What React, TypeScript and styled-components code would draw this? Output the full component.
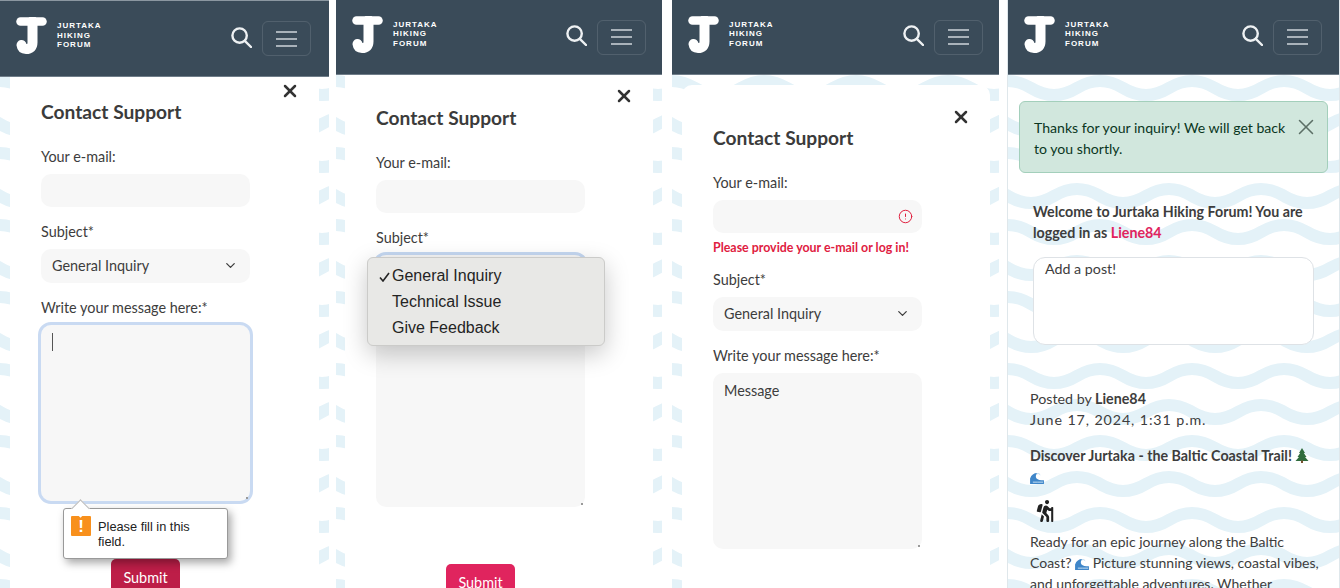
import React from 'react';
import styled, { createGlobalStyle } from 'styled-components';
import { ChevronDown, CircleAlert, X } from 'lucide-react';
import { FaHiking } from 'react-icons/fa';

const GlobalStyle = createGlobalStyle`
  html, body {
    margin: 0;
    padding: 0;
    background: #fff;
    overflow: hidden;
  }
  * {
    box-sizing: border-box;
  }
`;

const waves = encodeURIComponent(
  `<svg xmlns="http://www.w3.org/2000/svg" width="92" height="72"><g fill="none" stroke="#e4f2f8" stroke-width="12"><path d="M-23 18 Q0 4 23 18 T69 18 T115 18"/><path d="M-46 54 Q-23 40 0 54 T46 54 T92 54 T138 54"/></g></svg>`
);

const Page = styled.div`
  display: flex;
  width: 1340px;
  height: 588px;
  overflow: hidden;
  font-family: Lato, 'Noto Sans', sans-serif;
  font-size: 14.4px;
  line-height: 21px;
  color: #3d3d3d;
`;

const Phone = styled.section<{ $width: number; $gap: number; $framed?: boolean }>`
  flex: none;
  width: ${(p) => p.$width}px;
  margin-right: ${(p) => p.$gap}px;
  height: 588px;
  overflow: hidden;
  background-color: #fff;
  background-image: url("data:image/svg+xml,${waves}");
  background-position: 0 70px;
  ${(p) => (p.$framed ? 'border-left: 1px solid #dfe7eb; border-right: 1px solid #dfe7eb; font-size: 14.25px;' : '')}
`;

const Header = styled.header<{ $offset?: number; $right: number }>`
  display: flex;
  align-items: center;
  justify-content: space-between;
  height: ${(p) => 75 + (p.$offset ?? 0) * 2}px;
  padding: 0 ${(p) => p.$right}px 0 16px;
  background: #3a4b59;
  border-top: ${(p) => (p.$offset ? '1px solid #8b97a1' : 'none')};
  border-bottom: 1px solid #6f7d89;
`;

const Brand = styled.div`
  display: flex;
  align-items: center;
  gap: 10px;
  margin-bottom: 6px;
`;

const BrandText = styled.div`
  font-family: 'Liberation Sans', Arial, sans-serif;
  font-size: 8px;
  font-weight: 700;
  line-height: 9.5px;
  letter-spacing: 1px;
  color: #fff;
`;

const Tools = styled.div`
  display: flex;
  align-items: center;
  gap: 10px;
`;

const SearchWrap = styled.span`
  display: flex;
  margin-bottom: 3px;
`;

const MenuButton = styled.button`
  display: flex;
  flex-direction: column;
  align-items: center;
  justify-content: center;
  gap: 5px;
  width: 49px;
  height: 35px;
  padding: 0;
  background: transparent;
  border: 1px solid rgba(255, 255, 255, 0.12);
  border-radius: 6px;
`;

const MenuLine = styled.span`
  width: 21px;
  height: 2px;
  background: #a9b2ba;
`;

const Card = styled.div<{ $inset: number; $width: number; $top: number; $padTop: number }>`
  position: relative;
  width: ${(p) => p.$width}px;
  height: 600px;
  margin: ${(p) => p.$top}px 0 0 ${(p) => p.$inset}px;
  padding: ${(p) => p.$padTop}px 31px 0;
  background: #fff;
  border-radius: ${(p) => (p.$top ? '10px 10px 0 0' : '0')};
`;

const CloseButton = styled.button<{ $top: number }>`
  position: absolute;
  top: ${(p) => p.$top}px;
  right: 19px;
  display: flex;
  padding: 0;
  color: #333;
  background: none;
  border: 0;
`;

const Title = styled.h2`
  margin: -1px 0 22px;
  font-size: 19.2px;
  font-weight: 700;
  line-height: 24px;
  color: #3b3b3b;
`;

const Field = styled.div`
  position: relative;
  margin-bottom: 14px;
`;

const Label = styled.div`
  margin-bottom: 7px;
`;

const InputBox = styled.div`
  display: flex;
  align-items: center;
  justify-content: flex-end;
  width: 209px;
  height: 33px;
  padding: 0 9px;
  color: #e0203f;
  background: #f7f7f7;
  border-radius: 10px;
`;

const ErrorText = styled.div`
  margin-top: 7px;
  font-size: 12.4px;
  font-weight: 700;
  line-height: 15px;
  color: #e0203f;
`;

const SelectBox = styled.div<{ $focused?: boolean }>`
  display: flex;
  align-items: center;
  justify-content: space-between;
  width: 209px;
  height: 34px;
  padding: 0 12px 1px 11px;
  background: #f7f7f7;
  border-radius: 10px;
  outline: ${(p) => (p.$focused ? '3px solid #c5d8f2' : 'none')};
`;

const MessageBox = styled.div<{ $focused?: boolean }>`
  position: relative;
  width: 209px;
  height: 176px;
  padding: 7px 11px;
  background: #f7f7f7;
  border-radius: 10px;
  outline: ${(p) => (p.$focused ? '3px solid #c9daf2' : 'none')};
`;

const Caret = styled.div`
  width: 1px;
  height: 18px;
  margin-top: 1px;
  background: #555;
`;

const Grip = styled.span`
  position: absolute;
  right: 2px;
  bottom: 2px;
  width: 2px;
  height: 2px;
  background: #9a9a9a;
`;

const SubmitRow = styled.div<{ $gap: number }>`
  display: flex;
  justify-content: center;
  width: 209px;
  margin-top: ${(p) => p.$gap}px;
`;

const SubmitButton = styled.button<{ $pressed?: boolean }>`
  width: 69px;
  height: 36px;
  padding: 0;
  font-family: Lato, sans-serif;
  font-size: 14.4px;
  color: #fff;
  background: ${(p) => (p.$pressed ? '#bd1e48' : '#e0245e')};
  border: 0;
  border-radius: 5px 5px 0 0;
`;

const Tooltip = styled.div`
  position: absolute;
  top: 211px;
  left: 22px;
  z-index: 2;
  display: flex;
  gap: 7px;
  width: 165px;
  height: 51px;
  padding: 7px;
  font-family: 'Liberation Sans', Arial, sans-serif;
  font-size: 12.8px;
  line-height: 15px;
  color: #222;
  background: #fff;
  border: 1px solid #999;
  border-radius: 3px;
  box-shadow: 3px 4px 8px rgba(0, 0, 0, 0.35);

  &::before {
    content: '';
    position: absolute;
    top: -7px;
    left: 10px;
    width: 12px;
    height: 12px;
    background: #fff;
    border-top: 1px solid #bbb;
    border-left: 1px solid #bbb;
    transform: rotate(45deg);
  }
`;

const WarnIcon = styled.span`
  flex: none;
  display: flex;
  align-items: center;
  justify-content: center;
  width: 20px;
  height: 20px;
  font-size: 17px;
  font-weight: 700;
  color: #fff;
  background: #f8901c;
  border-radius: 1px;
`;

const TooltipText = styled.span`
  padding-top: 3px;
`;

const Dropdown = styled.ul`
  position: absolute;
  top: 30px;
  left: -9px;
  z-index: 2;
  width: 238px;
  height: 89px;
  margin: 0;
  padding: 5px 0 0;
  list-style: none;
  font-family: 'Liberation Sans', Arial, sans-serif;
  font-size: 16px;
  line-height: 26px;
  color: #242424;
  background: #e8e8e6;
  border: 1px solid #cbcbc9;
  border-radius: 6px;
  box-shadow: 0 8px 24px rgba(0, 0, 0, 0.22);
`;

const DropdownItem = styled.li`
  position: relative;
  padding-left: 24px;
`;

const Check = styled.svg`
  position: absolute;
  top: 9px;
  left: 11px;
`;

const Alert = styled.div`
  display: flex;
  align-items: flex-start;
  justify-content: space-between;
  width: 309px;
  height: 72px;
  margin: 26px 0 0 11px;
  padding: 15px 8px 0 14px;
  font-size: 14.1px;
  color: #0a3622;
  background: #d1e7dd;
  border: 1px solid #a3cfbb;
  border-radius: 6px;
`;

const AlertText = styled.div`
  width: 258px;
`;

const AlertClose = styled.span`
  display: flex;
  margin-top: -3px;
  color: #5c6f66;
`;

const Feed = styled.div`
  padding: 28px 16px 0 21px;
`;

const Welcome = styled.div`
  margin: 0 0 14px 4px;
  width: 290px;
  font-weight: 700;
`;

const UserLink = styled.span`
  color: #e0245e;
`;

const PostInput = styled.div`
  width: 281px;
  height: 88px;
  margin-left: 4px;
  padding: 0 11px;
  background: #fff;
  border: 1px solid #dee2e6;
  border-radius: 12px;
`;

const PostMeta = styled.div`
  margin: 43px 0 15px 1px;
`;

const PostDate = styled.div`
  font-variant-numeric: lining-nums tabular-nums;
  letter-spacing: 0.9px;
`;

const PostTitle = styled.div`
  margin-left: 1px;
  width: 290px;
  font-weight: 700;
`;

const Hiker = styled.div`
  display: flex;
  margin: 13px 0 9px 5px;
  color: #222;
`;

const PostBody = styled.p`
  margin: 0 0 0 1px;
  width: 292px;
  font-size: 14px;
`;

const Emoji = styled.svg`
  vertical-align: -2px;
`;

const Logo = () => (
  <svg width="31" height="37" viewBox="0 0 31 37">
    <path d="M4.5 4.5 H26.5" fill="none" stroke="#fff" strokeWidth="8.5" strokeLinecap="round" />
    <path
      d="M16.5 4 V25.5 Q16.5 32 10 32 Q6 32 5.5 28"
      fill="none"
      stroke="#fff"
      strokeWidth="10"
      strokeLinecap="round"
    />
  </svg>
);

const SearchIcon = () => (
  <svg width="21" height="21" viewBox="0 0 21 21">
    <circle cx="8.6" cy="8.6" r="7.2" fill="none" stroke="#eef1f3" strokeWidth="2.4" />
    <path d="M13.8 13.8 L20 20" stroke="#eef1f3" strokeWidth="2.4" strokeLinecap="round" />
  </svg>
);

const TreeEmoji = () => (
  <Emoji width="14" height="15" viewBox="0 0 14 15">
    <path d="M7 0 L10 5 H8.8 L11.5 9 H10 L13.5 13 H.5 L4 9 H2.5 L5.2 5 H4 Z" fill="#2f6b3c" />
    <rect x="6" y="12.5" width="2" height="2.5" fill="#7a5230" />
  </Emoji>
);

const WaveEmoji = () => (
  <Emoji width="14" height="12" viewBox="0 0 15 13">
    <path d="M0 13 V7 Q2 1 8 1 Q5 4 7 7 Q9 9 15 9 V13 Z" fill="#3f86c9" />
    <path d="M3 11 Q8 11 14 11" stroke="#cfe6f7" strokeWidth="1" fill="none" />
    <path d="M7 2 Q10 1 11 3" stroke="#b9d8ef" strokeWidth="1" fill="none" />
  </Emoji>
);

const TopBar = ({ offset, right }: { offset?: number; right: number }) => (
  <Header $offset={offset} $right={right}>
    <Brand>
      <Logo />
      <BrandText>
        JURTAKA
        <br />
        HIKING
        <br />
        FORUM
      </BrandText>
    </Brand>
    <Tools>
      <SearchWrap>
        <SearchIcon />
      </SearchWrap>
      <MenuButton aria-label="Menu">
        <MenuLine />
        <MenuLine />
        <MenuLine />
      </MenuButton>
    </Tools>
  </Header>
);

const Chevron = () => <ChevronDown size={15} strokeWidth={2} />;

function App() {
  return (
    <Page>
      <GlobalStyle />

      <Phone $width={329} $gap={7}>
        <TopBar offset={1} right={18} />
        <Card $inset={10} $width={309} $top={0} $padTop={24}>
          <CloseButton $top={4}>
            <X size={20} strokeWidth={3} />
          </CloseButton>
          <Title>Contact Support</Title>
          <Field>
            <Label>Your e-mail:</Label>
            <InputBox />
          </Field>
          <Field>
            <Label>Subject*</Label>
            <SelectBox>
              General Inquiry
              <Chevron />
            </SelectBox>
          </Field>
          <Field>
            <Label>Write your message here:*</Label>
            <MessageBox $focused>
              <Caret />
              <Grip />
            </MessageBox>
            <Tooltip>
              <WarnIcon>!</WarnIcon>
              <TooltipText>Please fill in this field.</TooltipText>
            </Tooltip>
          </Field>
          <SubmitRow $gap={58}>
            <SubmitButton $pressed>Submit</SubmitButton>
          </SubmitRow>
        </Card>
      </Phone>

      <Phone $width={326} $gap={10}>
        <TopBar right={16} />
        <Card $inset={9} $width={308} $top={0} $padTop={32}>
          <CloseButton $top={11}>
            <X size={20} strokeWidth={3} />
          </CloseButton>
          <Title>Contact Support</Title>
          <Field>
            <Label>Your e-mail:</Label>
            <InputBox />
          </Field>
          <Field>
            <Label>Subject*</Label>
            <SelectBox $focused>
              General Inquiry
              <Chevron />
            </SelectBox>
            <Dropdown>
              <DropdownItem>
                <Check width="11" height="10" viewBox="0 0 11 10">
                  <path d="M1 5.5 L4 9 L10 1" fill="none" stroke="#242424" strokeWidth="1.6" />
                </Check>
                General Inquiry
              </DropdownItem>
              <DropdownItem>Technical Issue</DropdownItem>
              <DropdownItem>Give Feedback</DropdownItem>
            </Dropdown>
          </Field>
          <Field>
            <Label>Write your message here:*</Label>
            <MessageBox>
              <Grip />
            </MessageBox>
          </Field>
          <SubmitRow $gap={57}>
            <SubmitButton>Submit</SubmitButton>
          </SubmitRow>
        </Card>
      </Phone>

      <Phone $width={327} $gap={8}>
        <TopBar right={16} />
        <Card $inset={10} $width={308} $top={10} $padTop={42}>
          <CloseButton $top={22}>
            <X size={20} strokeWidth={3} />
          </CloseButton>
          <Title>Contact Support</Title>
          <Field>
            <Label>Your e-mail:</Label>
            <InputBox>
              <CircleAlert size={15} strokeWidth={1.6} />
            </InputBox>
            <ErrorText>Please provide your e-mail or log in!</ErrorText>
          </Field>
          <Field>
            <Label>Subject*</Label>
            <SelectBox>
              General Inquiry
              <Chevron />
            </SelectBox>
          </Field>
          <Field>
            <Label>Write your message here:*</Label>
            <MessageBox>
              Message
              <Grip />
            </MessageBox>
          </Field>
        </Card>
      </Phone>

      <Phone $width={333} $gap={0} $framed>
        <TopBar right={17} />
        <Alert>
          <AlertText>Thanks for your inquiry! We will get back to you shortly.</AlertText>
          <AlertClose>
            <X size={26} strokeWidth={1.4} />
          </AlertClose>
        </Alert>
        <Feed>
          <Welcome>
            Welcome to Jurtaka Hiking Forum! You are logged in as <UserLink>Liene84</UserLink>
          </Welcome>
          <PostInput>Add a post!</PostInput>
          <PostMeta>
            Posted by <b>Liene84</b>
            <PostDate>June 17, 2024, 1:31 p.m.</PostDate>
          </PostMeta>
          <PostTitle>
            Discover Jurtaka - the Baltic Coastal Trail! <TreeEmoji /> <WaveEmoji />
          </PostTitle>
          <Hiker>
            <FaHiking size={22} />
          </Hiker>
          <PostBody>
            Ready for an epic journey along the Baltic Coast? <WaveEmoji /> Picture stunning views,
            coastal vibes, and unforgettable adventures. Whether
          </PostBody>
        </Feed>
      </Phone>
    </Page>
  );
}

export default App;
